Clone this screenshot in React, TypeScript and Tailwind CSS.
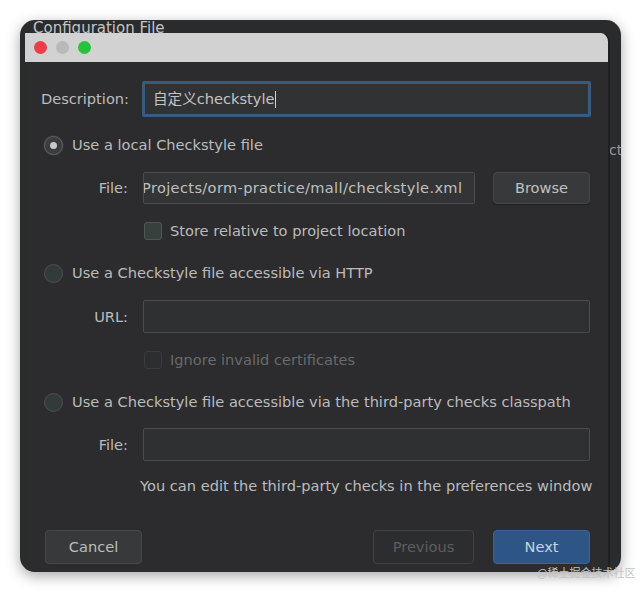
import React from "react";

const font = { fontFamily: '"DejaVu Sans", "Noto Sans CJK SC", sans-serif' };

function Radio({ checked }: { checked?: boolean }) {
  return checked ? (
    <div className="w-[19px] h-[19px] rounded-full border border-[#5f6264] bg-[#3a3c3e] flex items-center justify-center shadow-[0_0_0_1px_#35373a]">
      <div className="w-[7px] h-[7px] rounded-full bg-[#c9c9c9]" />
    </div>
  ) : (
    <div className="w-[19px] h-[19px] rounded-full border border-[#4c5052] bg-[#333a3a]" />
  );
}

export default function App() {
  return (
    <div className="relative w-[640px] h-[592px] bg-white pt-[20px] pl-[20px] overflow-hidden text-[14.6px]" style={font}>
      <div className="relative w-[601px] h-[552px] rounded-[15px] bg-[#2a2b2d] shadow-[0_4px_14px_rgba(0,0,0,0.35)] overflow-hidden">
        <div className="absolute left-[13px] top-[-3px] text-[15px] text-[#c4c4c4] leading-[22px]">Configuration File</div>
        <div className="absolute right-[0px] top-[121px] text-[14px] text-[#9a9a9a] leading-[18px] w-[12px] overflow-hidden whitespace-nowrap">ct</div>
        <div className="absolute left-[5px] top-[13px] w-[585px] h-[539px] bg-[#2c2c2e] rounded-tr-[9px] border-r-[2px] border-[#1f2021] overflow-hidden flex flex-col text-[#bbbcbd]">
          {/* title bar */}
          <div className="h-[30px] bg-[#d1d2d1] border-b border-[#2a2a2a] flex items-center pl-[9px] gap-[9px] shrink-0">
            <div className="w-[13px] h-[13px] rounded-full bg-[#ee3d4a]" />
            <div className="w-[13px] h-[13px] rounded-full bg-[#b8b9b8]" />
            <div className="w-[13px] h-[13px] rounded-full bg-[#27c43b]" />
          </div>

          {/* Description */}
          <div className="mt-[18px] h-[36px] flex items-center">
            <div className="w-[104px] text-right whitespace-nowrap">Description:</div>
            <div className="ml-[13px] w-[449px] h-[36px] rounded-[2px] border-[3px] border-[#375c80] bg-[#313234] flex items-center pl-[8px] text-[#c4c4c4]">
              <span>自定义checkstyle</span>
              <span className="w-[1px] h-[17px] bg-[#d0d0d0]" />
            </div>
          </div>

          {/* Radio 1 */}
          <div className="mt-[16px] h-[24px] flex items-center pl-[19px] gap-[9px]">
            <Radio checked />
            <span>Use a local Checkstyle file</span>
          </div>

          {/* File */}
          <div className="mt-[15px] h-[32px] flex items-center">
            <div className="w-[103px] text-right">File:</div>
            <div className="ml-[15px] w-[332px] h-[32px] border border-[#4a4c4e] bg-[#323436] rounded-[2px] flex items-center overflow-hidden whitespace-nowrap text-[#c0c0c0]">
              <span className="shrink-0 ml-[-2px] tracking-[0.35px]">Projects/orm-practice/mall/checkstyle.xml</span>
            </div>
            <div className="ml-[18px] w-[97px] h-[32px] rounded-[4px] border border-[#46494b] bg-[#37393b] flex items-center justify-center text-[#c0c0c0] shadow-[0_1px_1px_rgba(0,0,0,0.3)]">
              Browse
            </div>
          </div>

          {/* Store relative */}
          <div className="mt-[17px] h-[20px] flex items-center pl-[119px] gap-[8px]">
            <div className="w-[18px] h-[18px] rounded-[3px] border border-[#4f5654] bg-[#38403e]" />
            <span>Store relative to project location</span>
          </div>

          {/* Radio 2 */}
          <div className="mt-[20px] h-[24px] flex items-center pl-[19px] gap-[9px]">
            <Radio />
            <span>Use a Checkstyle file accessible via HTTP</span>
          </div>

          {/* URL */}
          <div className="mt-[15px] h-[33px] flex items-center">
            <div className="w-[103px] text-right">URL:</div>
            <div className="ml-[15px] w-[447px] h-[33px] border border-[#4a4c4e] bg-[#2f3032] rounded-[2px]" />
          </div>

          {/* Ignore */}
          <div className="mt-[17px] h-[20px] flex items-center pl-[119px] gap-[8px]">
            <div className="w-[18px] h-[18px] rounded-[3px] border border-[#3a3c3e] bg-[#2d2e30]" />
            <span className="text-[#686a6c]">Ignore invalid certificates</span>
          </div>

          {/* Radio 3 */}
          <div className="mt-[20px] h-[24px] flex items-center pl-[19px] gap-[9px]">
            <Radio />
            <span className="whitespace-nowrap">Use a Checkstyle file accessible via the third-party checks classpath</span>
          </div>

          {/* File 2 */}
          <div className="mt-[14px] h-[33px] flex items-center">
            <div className="w-[103px] text-right">File:</div>
            <div className="ml-[15px] w-[447px] h-[33px] border border-[#4a4c4e] bg-[#2f3032] rounded-[2px]" />
          </div>

          {/* Hint */}
          <div className="mt-[15px] h-[20px] flex items-center pl-[115px] whitespace-nowrap">
            You can edit the third-party checks in the preferences window
          </div>

          {/* Buttons */}
          <div className="mt-[34px] h-[34px] flex items-center pl-[20px]">
            <div className="w-[97px] h-[34px] rounded-[4px] border border-[#45484a] bg-[#37393b] flex items-center justify-center text-[#bdbdbd]">
              Cancel
            </div>
            <div className="ml-[231px] w-[101px] h-[34px] rounded-[4px] border border-[#404244] bg-[#2c2d2f] flex items-center justify-center text-[#5c5e60]">
              Previous
            </div>
            <div className="ml-[19px] w-[97px] h-[34px] rounded-[4px] border border-[#3a6594] bg-[#2d5586] flex items-center justify-center text-[#c6d3e2]">
              Next
            </div>
          </div>
        </div>
      </div>
      <div className="absolute left-[537px] top-[565px] text-[11px] text-[#c4c4c4] leading-[14px] whitespace-nowrap" style={{ fontFamily: '"Noto Sans CJK SC", sans-serif' }}>
        @稀土掘金技术社区
      </div>
    </div>
  );
}
